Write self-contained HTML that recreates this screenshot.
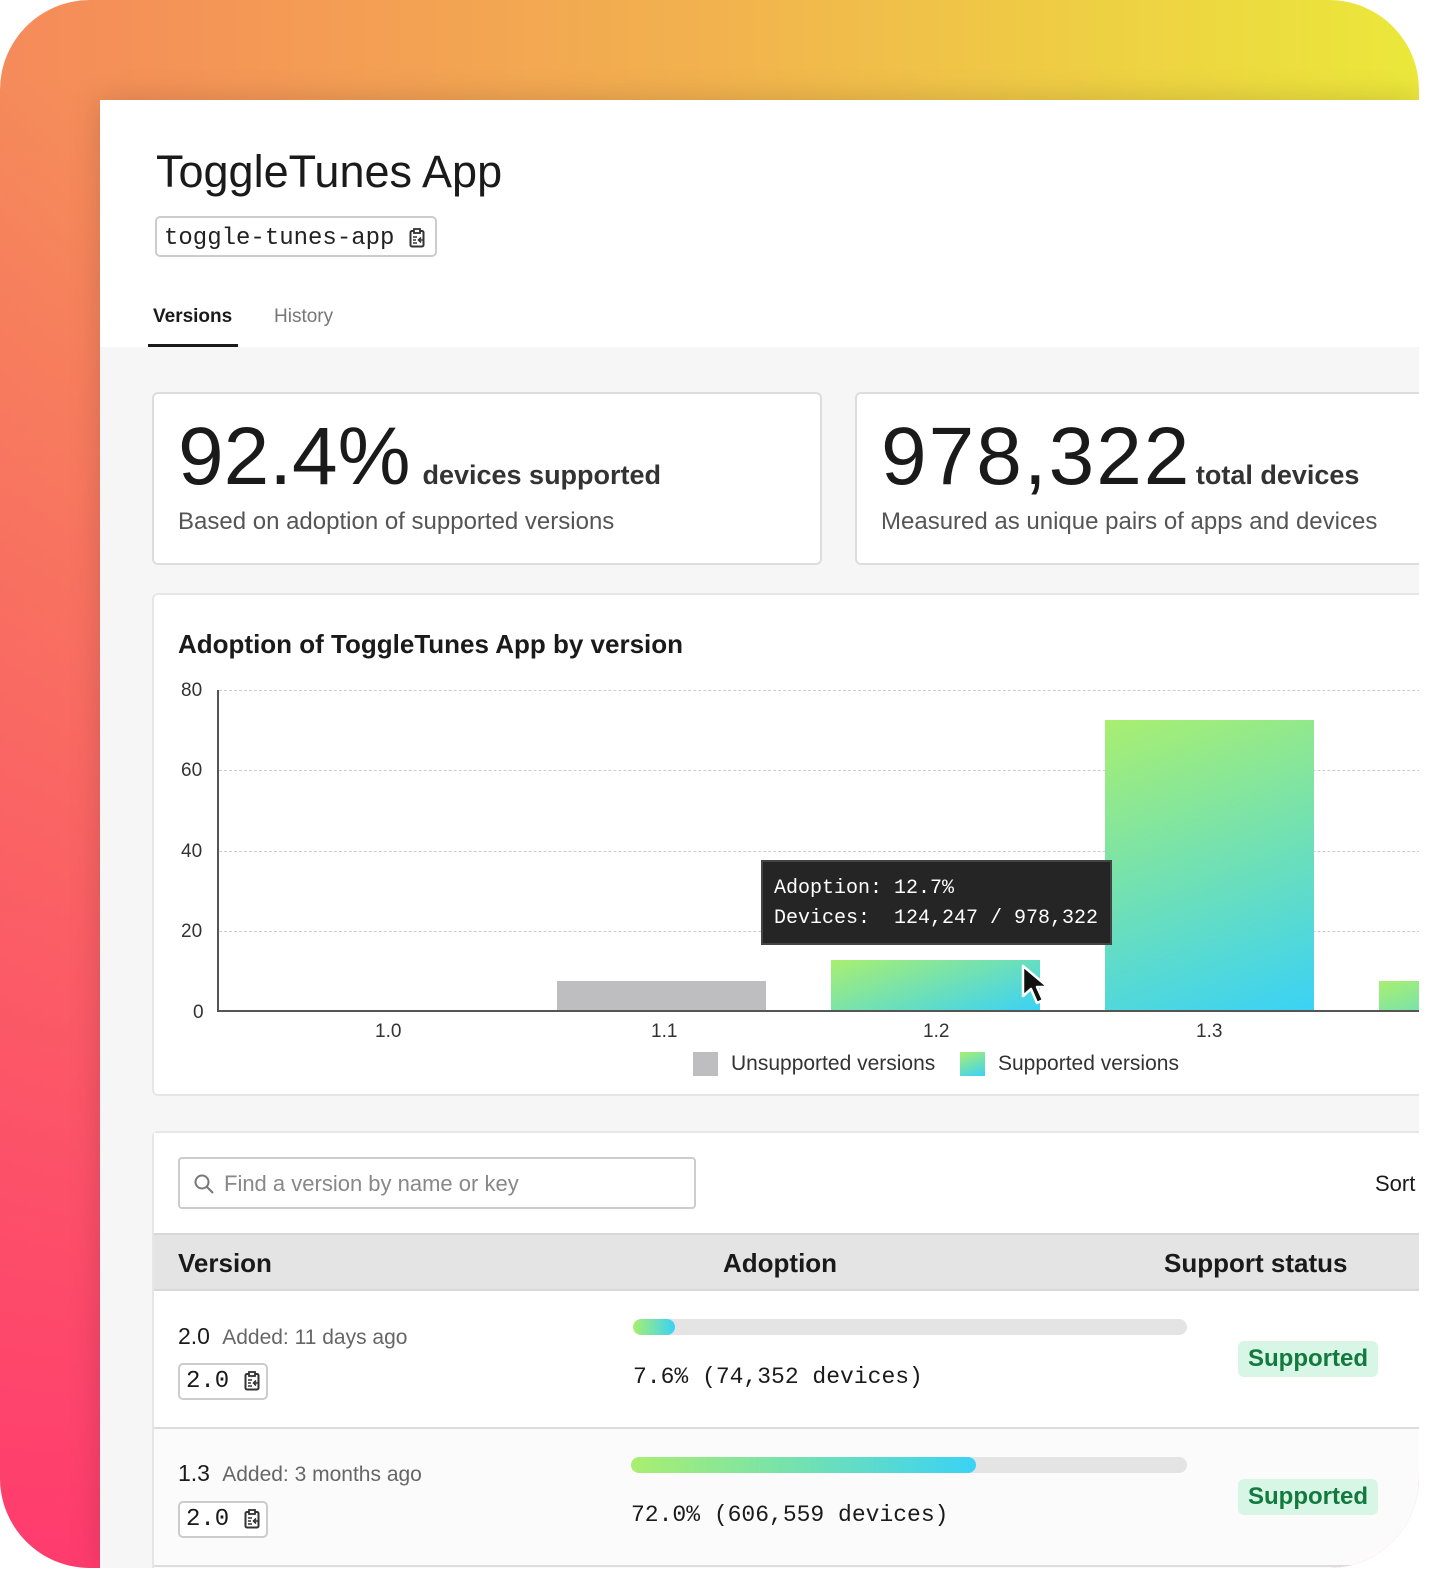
<!DOCTYPE html>
<html><head><meta charset="utf-8"><style>
*{box-sizing:border-box;margin:0;padding:0}
html,body{width:1430px;height:1580px;overflow:hidden;background:#fff}
body{font-family:"Liberation Sans",sans-serif;color:#1a1a1a;position:relative}
.frame{position:absolute;left:0;top:0;width:1419px;height:1568px;border-radius:90px;overflow:hidden;
background:linear-gradient(90deg,#f58a5a 0%,#f2b24e 50%,#ebe83a 100%)}
.grad{position:absolute;inset:0;background:linear-gradient(180deg,rgba(255,59,110,0) 5%,#ff3b6e 100%);}
.panel{position:absolute;left:100px;top:100px;right:0;bottom:0;background:#f6f6f6;overflow:hidden;box-shadow:0 0 30px rgba(0,0,0,.15)}
.head{position:absolute;left:0;top:0;right:0;height:247px;background:#fff}
.mono{font-family:"Liberation Mono",monospace}
.card{position:absolute;background:#fff;border:2px solid #ddd;border-radius:6px}
.big{font-size:82px}
.clip{display:inline-block;width:16px;height:20px;vertical-align:middle}
.bar{position:absolute;background:linear-gradient(160deg,#a9ef70,#3ad2f6)}
.grid{position:absolute;left:65px;right:0;border-top:1.5px dashed #ccc}
.yl{position:absolute;font-size:19px;color:#333}
.xl{position:absolute;font-size:19px;color:#333}
.tag{display:inline-block;border:2px solid #ccc;border-radius:5px;padding:3px 6px;font-size:24px;background:#fff}
.sup{position:absolute;background:#d8f6e6;color:#127a3e;font-weight:bold;font-size:24px;padding:4px 10px;border-radius:6px}
.track{position:absolute;height:16px;border-radius:8px;background:#e4e4e4;overflow:hidden}
.fill{height:100%;border-radius:8px;background:linear-gradient(90deg,#a9ef70,#3ad2f6)}
</style></head><body>
<div class="frame"><div class="grad"></div>
<div class="panel">
 <div class="head">
  <div style="position:absolute;left:56px;top:46px;font-size:45px">ToggleTunes App</div>
  <div class="mono" style="position:absolute;left:55px;top:116px;height:41px;width:282px;border:2px solid #ccc;border-radius:5px;font-size:24px;padding:7px 7px;color:#222">toggle-tunes-app <svg class="clip" viewBox="0 0 16 20"><rect x="1.5" y="3" width="13" height="15.5" rx="1.5" fill="none" stroke="#333" stroke-width="2"/><rect x="5" y="1" width="6" height="4" fill="#fff" stroke="#333" stroke-width="1.8"/><path d="M4 9h4M4 12h3M4 15h4M15 12h-5M12 9.5l-2.5 2.5 2.5 2.5" stroke="#333" stroke-width="1.6" fill="none"/></svg></div>
  <div style="position:absolute;left:53px;top:206px;font-size:19px;font-weight:bold">Versions</div>
  <div style="position:absolute;left:174px;top:206px;font-size:19px;color:#777">History</div>
  <div style="position:absolute;left:48px;top:244px;width:90px;height:3px;background:#1a1a1a"></div>
 </div>
 <div class="card" style="left:52px;top:292px;width:670px;height:173px">
  <div style="position:absolute;left:24px;top:16px"><span class="big">92.4%</span> <span style="font-size:27px;font-weight:bold;color:#333">&nbsp;devices supported</span></div>
  <div style="position:absolute;left:24px;top:114px;font-size:24px;color:#555">Based on adoption of supported versions</div>
 </div>
 <div class="card" style="left:755px;top:292px;width:700px;height:173px">
  <div style="position:absolute;left:24px;top:16px"><span class="big" style="letter-spacing:2px">978,322</span> <span style="font-size:27px;font-weight:bold;color:#333">total devices</span></div>
  <div style="position:absolute;left:24px;top:114px;font-size:24px;color:#555">Measured as unique pairs of apps and devices</div>
 </div>
 <div class="card" style="left:52px;top:493px;width:1400px;height:503px;border-color:#e6e6e6">
  <div style="position:absolute;left:24px;top:34px;font-size:26px;font-weight:bold">Adoption of ToggleTunes App by version</div>
  <div class="grid" style="top:95px"></div><div class="grid" style="top:175px"></div><div class="grid" style="top:256px"></div><div class="grid" style="top:336px"></div>
  <div class="yl" style="top:85px;left:27px">80</div><div class="yl" style="top:165px;left:27px">60</div><div class="yl" style="top:246px;left:27px">40</div><div class="yl" style="top:326px;left:27px">20</div><div class="yl" style="top:407px;left:39px">0</div>
  <div style="position:absolute;left:63px;top:95px;width:2px;height:322px;background:#555"></div>
  <div style="position:absolute;left:63px;top:415px;right:0;height:2px;background:#555"></div>
  <div style="position:absolute;left:403px;top:386px;width:209px;height:29px;background:#bebec0"></div>
  <div class="bar" style="left:677px;top:365px;width:209px;height:50px"></div>
  <div class="bar" style="left:951px;top:125px;width:209px;height:290px"></div>
  <div class="bar" style="left:1225px;top:386px;width:209px;height:29px"></div>
  <div class="xl" style="left:221px;top:426px">1.0</div><div class="xl" style="left:497px;top:426px">1.1</div><div class="xl" style="left:769px;top:426px">1.2</div><div class="xl" style="left:1042px;top:426px">1.3</div>
  <div style="position:absolute;left:539px;top:457px;width:25px;height:24px;background:#bebec0"></div>
  <div style="position:absolute;left:577px;top:457px;font-size:21px;color:#333">Unsupported versions</div>
  <div class="bar" style="left:806px;top:457px;width:25px;height:24px"></div>
  <div style="position:absolute;left:844px;top:457px;font-size:21px;color:#333">Supported versions</div>
  <div class="mono" style="position:absolute;left:607px;top:265px;width:351px;height:85px;background:#252525;border:2px solid #444;color:#fff;font-size:20px;line-height:30px;padding:12px 11px;white-space:pre">Adoption: 12.7%
Devices:  124,247 / 978,322</div>
  <svg style="position:absolute;left:866px;top:369px" width="40" height="44" viewBox="0 0 40 44"><path d="M3 2 L3 32 L11 25 L17 39 L23 36 L17 23 L28 23 Z" fill="#111" stroke="#fff" stroke-width="2.5" stroke-linejoin="round"/></svg>
 </div>
 <div class="card" style="left:52px;top:1031px;width:1400px;height:460px;border-color:#e6e6e6;background:#fbfbfb">
  <div style="position:absolute;left:0;top:0;right:0;height:100px;background:#fff"></div>
  <div style="position:absolute;left:24px;top:24px;width:518px;height:52px;border:2px solid #ccc;border-radius:4px;background:#fff;font-size:22px;color:#888;padding:12px 0 0 44px">Find a version by name or key
   <svg style="position:absolute;left:13px;top:14px" width="22" height="22" viewBox="0 0 22 22"><circle cx="9" cy="9" r="6.5" fill="none" stroke="#777" stroke-width="2"/><path d="M14 14l6 6" stroke="#777" stroke-width="2"/></svg></div>
  <div style="position:absolute;left:1221px;top:38px;font-size:22px">Sort</div>
  <div style="position:absolute;left:0;top:100px;right:0;height:58px;background:#e4e4e4;border-top:2px solid #d8d8d8;border-bottom:2px solid #d8d8d8"></div>
  <div style="position:absolute;left:24px;top:115px;font-size:26px;font-weight:bold">Version</div>
  <div style="position:absolute;left:569px;top:115px;font-size:26px;font-weight:bold">Adoption</div>
  <div style="position:absolute;left:1010px;top:115px;font-size:26px;font-weight:bold">Support status</div>
  <div style="position:absolute;left:0;top:158px;right:0;height:136px;background:#fff"></div>
  <div style="position:absolute;left:24px;top:190px;font-size:23px">2.0 <span style="font-size:21px;color:#666">&nbsp;Added: 11 days ago</span></div>
  <div class="tag mono" style="position:absolute;left:24px;top:230px">2.0 <svg class="clip" viewBox="0 0 16 20"><rect x="1.5" y="3" width="13" height="15.5" rx="1.5" fill="none" stroke="#333" stroke-width="2"/><rect x="5" y="1" width="6" height="4" fill="#fff" stroke="#333" stroke-width="1.8"/><path d="M4 9h4M4 12h3M4 15h4M15 12h-5M12 9.5l-2.5 2.5 2.5 2.5" stroke="#333" stroke-width="1.6" fill="none"/></svg></div>
  <div class="track" style="left:479px;top:186px;width:554px"><div class="fill" style="width:42px"></div></div>
  <div class="mono" style="position:absolute;left:479px;top:231px;font-size:23px">7.6% (74,352 devices)</div>
  <div class="sup" style="left:1084px;top:208px">Supported</div>
  <div style="position:absolute;left:0;top:294px;right:0;height:2px;background:#ddd"></div>
  <div style="position:absolute;left:24px;top:327px;font-size:23px">1.3 <span style="font-size:21px;color:#666">&nbsp;Added: 3 months ago</span></div>
  <div class="tag mono" style="position:absolute;left:24px;top:368px">2.0 <svg class="clip" viewBox="0 0 16 20"><rect x="1.5" y="3" width="13" height="15.5" rx="1.5" fill="none" stroke="#333" stroke-width="2"/><rect x="5" y="1" width="6" height="4" fill="#fff" stroke="#333" stroke-width="1.8"/><path d="M4 9h4M4 12h3M4 15h4M15 12h-5M12 9.5l-2.5 2.5 2.5 2.5" stroke="#333" stroke-width="1.6" fill="none"/></svg></div>
  <div class="track" style="left:477px;top:324px;width:556px"><div class="fill" style="width:345px"></div></div>
  <div class="mono" style="position:absolute;left:477px;top:369px;font-size:23px">72.0% (606,559 devices)</div>
  <div class="sup" style="left:1084px;top:346px">Supported</div>
  <div style="position:absolute;left:0;top:432px;right:0;height:2px;background:#ddd"></div>
 </div>
</div>
</div>
</body></html>
